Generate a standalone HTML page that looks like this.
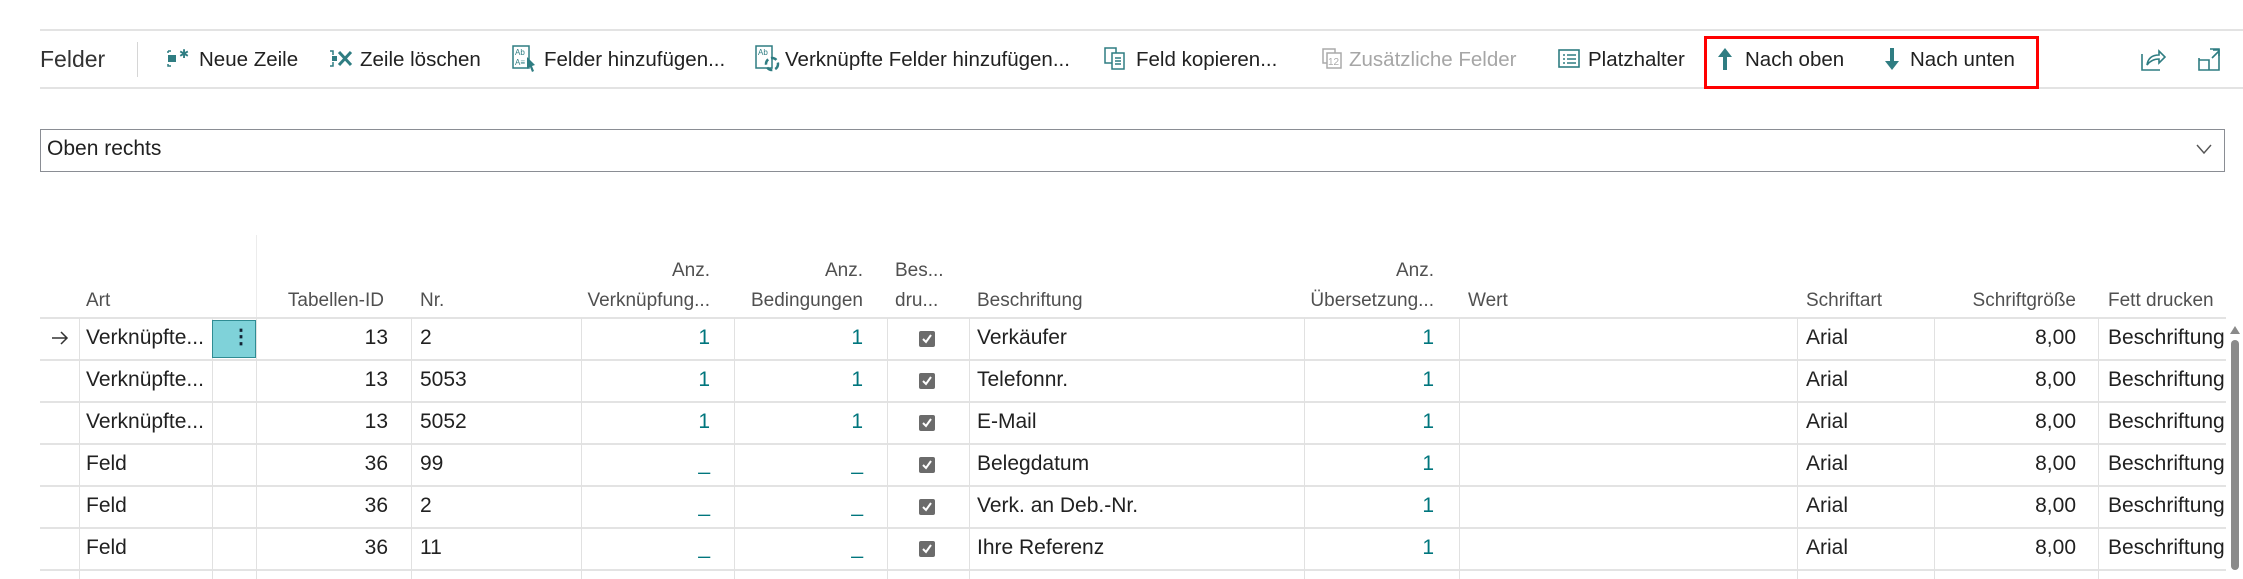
<!DOCTYPE html>
<html><head><meta charset="utf-8"><style>
*{margin:0;padding:0;box-sizing:border-box}
body{width:2243px;height:579px;background:#fff;font-family:"Segoe UI","Liberation Sans",sans-serif;color:#212121;position:relative;overflow:hidden}
.a{position:absolute;white-space:nowrap}
.hl{position:absolute;height:2px;background:#e3e3e3}
.vl{position:absolute;width:1px;background:#e1e1e1}
.tb{font-size:20.5px;top:47px;line-height:26px}
.ic{position:absolute;top:48px}
.h{font-size:19px;color:#505050;line-height:20px}
.c{font-size:21px;line-height:24px}
.r{text-align:right}
.t{color:#00767d}
.cb{position:absolute;width:16px;height:16px;background:#6b6b6b;border-radius:2px}
</style></head><body>
<div class="hl" style="left:40px;top:29px;width:2203px"></div>
<div class="hl" style="left:40px;top:87px;width:2203px"></div>
<div class="a" style="left:40px;top:46px;font-size:23px;color:#333">Felder</div>
<div class="vl" style="left:137px;top:42px;height:35px;background:#d6d6d6"></div>

<svg class="ic" style="left:167px;top:46px" width="26" height="24"><rect x="1" y="9" width="8" height="7" fill="#2f7d82"/><path d="M1 5h3M1 5v2M1 18v2h3" stroke="#2f7d82" fill="none" stroke-width="1.5"/><text x="12" y="12" font-size="12" fill="#2f7d82" font-family="Liberation Sans">✱</text></svg>
<div class="a tb" style="left:199px">Neue Zeile</div>
<svg class="ic" style="left:329px;top:48px" width="28" height="22"><path d="M1 3h3v4M1 18h3v-4" stroke="#2f7d82" fill="none" stroke-width="1.5"/><rect x="3" y="8" width="5" height="5" fill="#2f7d82"/><path d="M10 4l12 13M22 4L10 17" stroke="#2f7d82" stroke-width="3"/></svg>
<div class="a tb" style="left:360px">Zeile löschen</div>
<svg class="ic" style="left:512px;top:45px" width="26" height="28"><rect x="1" y="1" width="16" height="22" fill="none" stroke="#2f7d82" stroke-width="1.5"/><text x="3" y="10" font-size="8" fill="#2f7d82" font-family="Liberation Sans">Ab</text><text x="3" y="20" font-size="8" fill="#2f7d82" font-family="Liberation Sans">A≡</text><path d="M15 12l8 8-3 1 2 5-2 1-2-5-3 2z" fill="#2f7d82"/></svg>
<div class="a tb" style="left:544px">Felder hinzufügen...</div>
<svg class="ic" style="left:755px;top:45px" width="26" height="28"><rect x="1" y="1" width="16" height="22" fill="none" stroke="#2f7d82" stroke-width="1.5"/><text x="3" y="10" font-size="8" fill="#2f7d82" font-family="Liberation Sans">Ab</text><circle cx="17" cy="19" r="6" fill="none" stroke="#2f7d82" stroke-width="2.5" stroke-dasharray="6 3"/></svg>
<div class="a tb" style="left:785px">Verknüpfte Felder hinzufügen...</div>
<svg class="ic" style="left:1104px;top:47px" width="26" height="24"><rect x="1" y="1" width="11" height="15" fill="none" stroke="#2f7d82" stroke-width="1.5"/><rect x="8" y="6" width="12" height="16" fill="#fff" stroke="#2f7d82" stroke-width="1.5"/><path d="M11 11h6M11 14h6M11 17h6" stroke="#2f7d82" stroke-width="1.5"/></svg>
<div class="a tb" style="left:1136px">Feld kopieren...</div>
<svg class="ic" style="left:1322px;top:47px" width="24" height="24"><rect x="1" y="2" width="12" height="14" fill="none" stroke="#aaa" stroke-width="1.5"/><rect x="5" y="6" width="14" height="15" fill="#fff" stroke="#aaa" stroke-width="1.5"/><text x="6" y="18" font-size="10" fill="#aaa" font-family="Liberation Sans">12</text></svg>
<div class="a tb" style="left:1349px;color:#a6a6a6">Zusätzliche Felder</div>
<svg class="ic" style="left:1558px;top:49px" width="24" height="20"><rect x="1" y="1" width="20" height="17" fill="none" stroke="#2f7d82" stroke-width="1.6"/><path d="M5 6h2M9 6h9M5 10h2M9 10h9M5 14h2M9 14h9" stroke="#2f7d82" stroke-width="1.6"/></svg>
<div class="a tb" style="left:1588px">Platzhalter</div>
<div class="a" style="left:1704px;top:36px;width:335px;height:53px;border:3px solid #f00"></div>
<svg class="ic" style="left:1716px;top:47px" width="18" height="24"><path d="M9 1L2 10h5v13h4V10h5z" fill="#2f7d82"/></svg>
<div class="a tb" style="left:1745px">Nach oben</div>
<svg class="ic" style="left:1883px;top:47px" width="18" height="24"><path d="M9 23L2 14h5V1h4v13h5z" fill="#2f7d82"/></svg>
<div class="a tb" style="left:1910px">Nach unten</div>
<svg class="ic" style="left:2140px;top:46px" width="26" height="26"><path d="M2 8v16h18" fill="none" stroke="#2f7d82" stroke-width="1.6"/><path d="M7 19c1-7 5-10 12-10V5l6 6-6 6v-4c-5 0-9 2-12 6z" fill="none" stroke="#2f7d82" stroke-width="1.6"/></svg>
<svg class="ic" style="left:2198px;top:48px" width="24" height="24"><path d="M1 10v12h20V1H12" fill="none" stroke="#2f7d82" stroke-width="1.6"/><path d="M1 12h10v10M14 10l7-7M15 2h6v6" fill="none" stroke="#2f7d82" stroke-width="1.6"/></svg>

<div class="a" style="left:40px;top:129px;width:2185px;height:43px;border:1.5px solid #8a8d94"></div>
<div class="a" style="left:47px;top:137px;font-size:21px">Oben rechts</div>
<svg class="a" style="left:2196px;top:143px" width="16" height="12"><path d="M1 2l7 8 7-8" fill="none" stroke="#555" stroke-width="1.4"/></svg>

<div class="vl" style="left:256px;top:235px;height:83px;background:#ececec"></div>
<div class="a h" style="left:86px;top:291px">Art</div>
<div class="a h r" style="right:1859px;top:291px">Tabellen-ID</div>
<div class="a h" style="left:420px;top:291px">Nr.</div>
<div class="a h r" style="right:1533px;top:261px">Anz.</div>
<div class="a h r" style="right:1533px;top:291px">Verknüpfung...</div>
<div class="a h r" style="right:1380px;top:261px">Anz.</div>
<div class="a h r" style="right:1380px;top:291px">Bedingungen</div>
<div class="a h" style="left:895px;top:261px">Bes...</div>
<div class="a h" style="left:895px;top:291px">dru...</div>
<div class="a h" style="left:977px;top:291px">Beschriftung</div>
<div class="a h r" style="right:809px;top:261px">Anz.</div>
<div class="a h r" style="right:809px;top:291px">Übersetzung...</div>
<div class="a h" style="left:1468px;top:291px">Wert</div>
<div class="a h" style="left:1806px;top:291px">Schriftart</div>
<div class="a h r" style="right:167px;top:291px">Schriftgröße</div>
<div class="a h" style="left:2108px;top:291px">Fett drucken</div>

<div class="hl" style="left:40px;top:317px;width:2186px"></div>
<div class="hl" style="left:40px;top:359px;width:2186px"></div>
<div class="hl" style="left:40px;top:401px;width:2186px"></div>
<div class="hl" style="left:40px;top:443px;width:2186px"></div>
<div class="hl" style="left:40px;top:485px;width:2186px"></div>
<div class="hl" style="left:40px;top:527px;width:2186px"></div>
<div class="hl" style="left:40px;top:569px;width:2186px"></div>
<div class="vl" style="left:79px;top:318px;height:261px"></div>
<div class="vl" style="left:212px;top:318px;height:261px"></div>
<div class="vl" style="left:256px;top:318px;height:261px"></div>
<div class="vl" style="left:411px;top:318px;height:261px"></div>
<div class="vl" style="left:581px;top:318px;height:261px"></div>
<div class="vl" style="left:734px;top:318px;height:261px"></div>
<div class="vl" style="left:887px;top:318px;height:261px"></div>
<div class="vl" style="left:969px;top:318px;height:261px"></div>
<div class="vl" style="left:1304px;top:318px;height:261px"></div>
<div class="vl" style="left:1459px;top:318px;height:261px"></div>
<div class="vl" style="left:1797px;top:318px;height:261px"></div>
<div class="vl" style="left:1934px;top:318px;height:261px"></div>
<div class="vl" style="left:2098px;top:318px;height:261px"></div>
<div class="a" style="left:2231px;top:340px;width:8px;height:230px;background:#8a8a8a;border-radius:4px"></div>
<svg class="a" style="left:2230px;top:326px" width="10" height="8"><path d="M5 0l5 8H0z" fill="#8a8a8a"/></svg>

<div class="a" style="left:212px;top:320px;width:44px;height:38px;background:#7fd2d9;border:1px solid #2f8c93"></div>
<div class="a" style="left:231px;top:324px;font-size:20px;font-weight:bold;color:#123">⋮</div>
<svg class="a" style="left:51px;top:331px" width="18" height="14"><path d="M1 7h15M10 1l6 6-6 6" fill="none" stroke="#333" stroke-width="1.5"/></svg>

<div class="a c" style="left:86px;top:326px">Verknüpfte...</div>
<div class="a c" style="left:86px;top:368px">Verknüpfte...</div>
<div class="a c" style="left:86px;top:410px">Verknüpfte...</div>
<div class="a c" style="left:86px;top:452px">Feld</div>
<div class="a c" style="left:86px;top:494px">Feld</div>
<div class="a c" style="left:86px;top:536px">Feld</div>

<div class="a c r" style="right:1855px;top:326px">13</div>
<div class="a c r" style="right:1855px;top:368px">13</div>
<div class="a c r" style="right:1855px;top:410px">13</div>
<div class="a c r" style="right:1855px;top:452px">36</div>
<div class="a c r" style="right:1855px;top:494px">36</div>
<div class="a c r" style="right:1855px;top:536px">36</div>

<div class="a c" style="left:420px;top:326px">2</div>
<div class="a c" style="left:420px;top:368px">5053</div>
<div class="a c" style="left:420px;top:410px">5052</div>
<div class="a c" style="left:420px;top:452px">99</div>
<div class="a c" style="left:420px;top:494px">2</div>
<div class="a c" style="left:420px;top:536px">11</div>

<div class="a c r t" style="right:1533px;top:326px">1</div>
<div class="a c r t" style="right:1533px;top:368px">1</div>
<div class="a c r t" style="right:1533px;top:410px">1</div>
<div class="a c r t" style="right:1533px;top:452px">_</div>
<div class="a c r t" style="right:1533px;top:494px">_</div>
<div class="a c r t" style="right:1533px;top:536px">_</div>
<div class="a c r t" style="right:1380px;top:326px">1</div>
<div class="a c r t" style="right:1380px;top:368px">1</div>
<div class="a c r t" style="right:1380px;top:410px">1</div>
<div class="a c r t" style="right:1380px;top:452px">_</div>
<div class="a c r t" style="right:1380px;top:494px">_</div>
<div class="a c r t" style="right:1380px;top:536px">_</div>

<div class="cb" style="left:919px;top:331px"></div>
<div class="cb" style="left:919px;top:373px"></div>
<div class="cb" style="left:919px;top:415px"></div>
<div class="cb" style="left:919px;top:457px"></div>
<div class="cb" style="left:919px;top:499px"></div>
<div class="cb" style="left:919px;top:541px"></div>
<svg class="a" style="left:919px;top:331px" width="16" height="226"><g fill="none" stroke="#fff" stroke-width="2"><path d="M4 8l3 3 5-7"/><path d="M4 50l3 3 5-7"/><path d="M4 92l3 3 5-7"/><path d="M4 134l3 3 5-7"/><path d="M4 176l3 3 5-7"/><path d="M4 218l3 3 5-7"/></g></svg>

<div class="a c" style="left:977px;top:326px">Verkäufer</div>
<div class="a c" style="left:977px;top:368px">Telefonnr.</div>
<div class="a c" style="left:977px;top:410px">E-Mail</div>
<div class="a c" style="left:977px;top:452px">Belegdatum</div>
<div class="a c" style="left:977px;top:494px">Verk. an Deb.-Nr.</div>
<div class="a c" style="left:977px;top:536px">Ihre Referenz</div>

<div class="a c r t" style="right:809px;top:326px">1</div>
<div class="a c r t" style="right:809px;top:368px">1</div>
<div class="a c r t" style="right:809px;top:410px">1</div>
<div class="a c r t" style="right:809px;top:452px">1</div>
<div class="a c r t" style="right:809px;top:494px">1</div>
<div class="a c r t" style="right:809px;top:536px">1</div>

<div class="a c" style="left:1806px;top:326px">Arial</div>
<div class="a c" style="left:1806px;top:368px">Arial</div>
<div class="a c" style="left:1806px;top:410px">Arial</div>
<div class="a c" style="left:1806px;top:452px">Arial</div>
<div class="a c" style="left:1806px;top:494px">Arial</div>
<div class="a c" style="left:1806px;top:536px">Arial</div>

<div class="a c r" style="right:167px;top:326px">8,00</div>
<div class="a c r" style="right:167px;top:368px">8,00</div>
<div class="a c r" style="right:167px;top:410px">8,00</div>
<div class="a c r" style="right:167px;top:452px">8,00</div>
<div class="a c r" style="right:167px;top:494px">8,00</div>
<div class="a c r" style="right:167px;top:536px">8,00</div>

<div class="a" style="left:2099px;top:318px;width:127px;height:261px;overflow:hidden">
<div class="a c" style="left:9px;top:8px">Beschriftung</div>
<div class="a c" style="left:9px;top:50px">Beschriftung</div>
<div class="a c" style="left:9px;top:92px">Beschriftung</div>
<div class="a c" style="left:9px;top:134px">Beschriftung</div>
<div class="a c" style="left:9px;top:176px">Beschriftung</div>
<div class="a c" style="left:9px;top:218px">Beschriftung</div>
</div>
</body></html>
